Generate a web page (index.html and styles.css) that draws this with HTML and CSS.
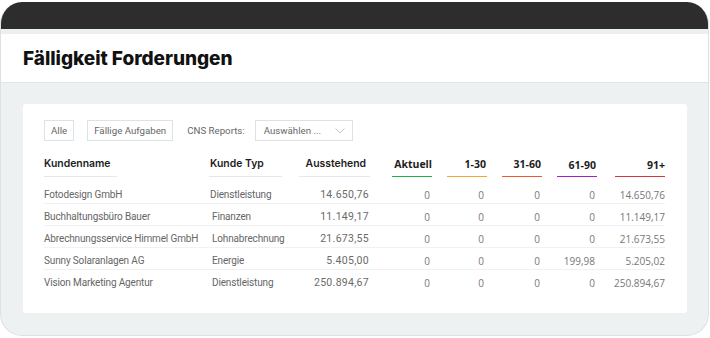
FILE: index.html
```html
<!DOCTYPE html>
<html lang="de">
<head>
<meta charset="utf-8">
<title>Fälligkeit Forderungen</title>
<link rel="stylesheet" href="styles.css">
</head>
<body>
<div class="device">
  <div class="topbar"></div>
  <div class="strip"></div>
  <header class="header"><h1 class="title">Fälligkeit Forderungen</h1></header>
  <main class="content">
    <section class="card">
      <div class="toolbar">
        <button class="btn">Alle</button>
        <button class="btn">Fällige Aufgaben</button>
        <span class="label">CNS Reports:</span>
        <div class="select"><span>Auswählen ...</span>
          <svg class="chev" width="10" height="6" viewBox="0 0 10 6"><path d="M0.5 0.5 L5 5 L9.5 0.5" fill="none" stroke="#c4c8cc" stroke-width="1"/></svg>
        </div>
      </div>
      <div class="table">
        <div class="th th-name">Kundenname</div>
        <div class="th th-typ">Kunde Typ</div>
        <div class="th th-num th-aus">Ausstehend</div>
        <div class="th th-num th-b c-green">Aktuell</div>
        <div class="th th-num th-b c-orange">1-30</div>
        <div class="th th-num th-b c-red2">31-60</div>
        <div class="th th-num th-b c-purple lower">61-90</div>
        <div class="th th-num th-b c-red lower">91+</div>

        <div class="row first">
          <div class="td name">Fotodesign GmbH</div>
          <div class="td typ typ-first">Dienstleistung</div>
          <div class="td aus">14.650,76</div>
          <div class="td n c1">0</div>
          <div class="td n c2">0</div>
          <div class="td n c3">0</div>
          <div class="td n c4">0</div>
          <div class="td n c5">14.650,76</div>
        </div>
        <div class="row">
          <div class="td name">Buchhaltungsbüro Bauer</div>
          <div class="td typ">Finanzen</div>
          <div class="td aus">11.149,17</div>
          <div class="td n c1">0</div>
          <div class="td n c2">0</div>
          <div class="td n c3">0</div>
          <div class="td n c4">0</div>
          <div class="td n c5">11.149,17</div>
        </div>
        <div class="row">
          <div class="td name">Abrechnungsservice Himmel GmbH</div>
          <div class="td typ">Lohnabrechnung</div>
          <div class="td aus">21.673,55</div>
          <div class="td n c1">0</div>
          <div class="td n c2">0</div>
          <div class="td n c3">0</div>
          <div class="td n c4">0</div>
          <div class="td n c5">21.673,55</div>
        </div>
        <div class="row">
          <div class="td name">Sunny Solaranlagen AG</div>
          <div class="td typ">Energie</div>
          <div class="td aus">5.405,00</div>
          <div class="td n c1">0</div>
          <div class="td n c2">0</div>
          <div class="td n c3">0</div>
          <div class="td n c4">199,98</div>
          <div class="td n c5">5.205,02</div>
        </div>
        <div class="row last">
          <div class="td name">Vision Marketing Agentur</div>
          <div class="td typ">Dienstleistung</div>
          <div class="td aus">250.894,67</div>
          <div class="td n c1">0</div>
          <div class="td n c2">0</div>
          <div class="td n c3">0</div>
          <div class="td n c4">0</div>
          <div class="td n c5">250.894,67</div>
        </div>
      </div>
    </section>
  </main>
</div>
</body>
</html>
```

FILE: styles.css
```css
* { box-sizing: border-box; }
html, body { margin: 0; padding: 0; background: #ffffff; }
body { font-family: Roboto, "Liberation Sans", sans-serif; }

.device {
  margin-top: 2px;
  width: 709px;
  height: 334px;
  border: 1px solid #dde1e3;
  border-top: none;
  border-radius: 22px;
  background: #eef1f2;
  overflow: hidden;
  display: flex;
  flex-direction: column;
}
.topbar { height: 27px; background: #2d2d2d; flex: none; }
.strip { height: 5px; background: #eceff0; flex: none; }
.header {
  flex: none;
  height: 49px;
  background: #ffffff;
  border-bottom: 1px solid #e1e5e7;
  padding-left: 22px;
  display: flex;
  align-items: center;
}
.title {
  margin: 0;
  font-family: Inter, "Noto Sans", sans-serif;
  font-weight: 800;
  font-size: 19px;
  color: #111;
  letter-spacing: -0.05px;
}
.content { flex: 1; padding: 21px 21px 0 22px; }
.card {
  background: #fff;
  border-radius: 3px;
  height: 209px;
  padding: 16px 0 0 21px;
}
.toolbar { display: flex; align-items: center; height: 21px; }
.btn {
  font-family: Roboto, sans-serif;
  font-size: 9.7px;
  color: #666;
  background: #fff;
  border: 1px solid #dfe2e4;
  height: 21px;
  padding: 0 6px;
  margin: 0 13px 0 0;
}
.label { font-size: 9.7px; color: #666; margin: 0 10px 0 1px; }
.select {
  width: 98px; height: 21px;
  border: 1px solid #dfe2e4;
  display: flex; align-items: center; justify-content: space-between;
  padding: 0 7px 0 8px;
  font-size: 9.7px; color: #666;
}

.table {
  margin-top: 15px;
  display: grid;
  grid-template-columns: 165px 90px 71px 62px 55px 55px 55px 68px;
  width: 621px;
}
.th {
  font-family: Inter, "Noto Sans", sans-serif;
  font-weight: 600;
  font-size: 10.4px;
  color: #1d1d1d;
  height: 21px;
  line-height: 14px;
  padding-top: 1px;
  border-bottom: 1.5px solid #e2e8ec;
}
.th-name { width: 73px; }
.th-typ { width: 73px; padding-left: 1px; }
.th-num { text-align: right; }
.th-aus { padding-right: 4px; }
.th-b { font-family: "Open Sans", sans-serif; font-weight: 700; font-size: 10.5px; }
.lower { padding-top: 2px; }
.c-green { border-bottom-color: #22b04b; margin-left: 22px; }
.c-orange { border-bottom-color: #f5a533; margin-left: 15px; padding-right: 1px; }
.c-red2 { border-bottom-color: #ea5a2e; margin-left: 15px; padding-right: 1px; }
.c-purple { border-bottom-color: #a21fc5; margin-left: 15px; padding-right: 1px; }
.c-red { border-bottom-color: #d3363f; margin-left: 18px; }

.row { display: contents; }
.td {
  height: 22px;
  padding-top: 6px;
  line-height: 14px;
  font-size: 10px;
  letter-spacing: -0.15px;
  color: #666;
  border-bottom: 1px solid #f0f1f2;
  white-space: nowrap;
}
.row.first .td { margin-top: 5px; }
.row.last .td { border-bottom: none; }
.typ { padding-left: 3px; }
.typ.typ-first { padding-left: 1px; }
.aus { text-align: right; padding-right: 1px; font-size: 10.5px; letter-spacing: 0.3px; color: #6a6a6a; }
.n {
  font-family: "Open Sans", sans-serif;
  font-size: 10px;
  letter-spacing: 0;
  color: #777;
  text-align: right;
}
.c1 { padding-right: 2px; }
.c2 { padding-right: 3px; }
.c3 { padding-right: 2px; }
.c4 { padding-right: 2px; }
.c5 { padding-right: 0; }
```
